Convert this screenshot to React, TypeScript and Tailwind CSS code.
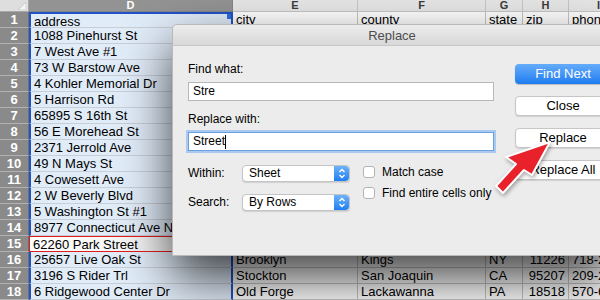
import React from "react";

const cols = [
  { name: "D", w: 204 },
  { name: "E", w: 125 },
  { name: "F", w: 128 },
  { name: "G", w: 37 },
  { name: "H", w: 46 },
  { name: "I", w: 60 },
];

const rows: string[][] = [
  ["address", "city", "county", "state", "zip", "phone"],
  ["1088 Pinehurst St", "", "", "", "", ""],
  ["7 West Ave #1", "", "", "", "", ""],
  ["73 W Barstow Ave", "", "", "", "", ""],
  ["4 Kohler Memorial Dr", "", "", "", "", ""],
  ["5 Harrison Rd", "", "", "", "", ""],
  ["65895 S 16th St", "", "", "", "", ""],
  ["56 E Morehead St", "", "", "", "", ""],
  ["2371 Jerrold Ave", "", "", "", "", ""],
  ["49 N Mays St", "", "", "", "", ""],
  ["4 Cowesett Ave", "", "", "", "", ""],
  ["2 W Beverly Blvd", "", "", "", "", ""],
  ["5 Washington St #1", "", "", "", "", ""],
  ["8977 Connecticut Ave Nw #3", "", "", "", "", ""],
  ["62260 Park Street", "", "", "", "", ""],
  ["25657 Live Oak St", "Brooklyn", "Kings", "NY", "11226", "718-201-5538"],
  ["3196 S Rider Trl", "Stockton", "San Joaquin", "CA", "95207", "209-242-7022"],
  ["6 Ridgewood Center Dr", "Old Forge", "Lackawanna", "PA", "18518", "570-648-3035"],
];

const font = { fontFamily: '"Liberation Sans", Arial, sans-serif' };

const Stepper: React.FC = () => (
  <div className="w-[15px] h-full rounded-r-[4px] bg-gradient-to-b from-[#6cb1fa] to-[#1c7ff1] flex items-center justify-center">
    <svg width="8" height="11" viewBox="0 0 8 11" fill="none" stroke="white" strokeWidth="1.4">
      <path d="M1.5 4 L4 1.5 L6.5 4" />
      <path d="M1.5 7 L4 9.5 L6.5 7" />
    </svg>
  </div>
);

const Select: React.FC<{ value: string }> = ({ value }) => (
  <div className="w-[108px] h-[17px] bg-white rounded-[4px] border border-[#c4c4c4] shadow-[0_1px_1px_rgba(0,0,0,0.12)] flex items-stretch">
    <div className="flex-1 pl-[6px] text-[12px] leading-[15px] text-black">{value}</div>
    <Stepper />
  </div>
);

const Checkbox: React.FC<{ label: string }> = ({ label }) => (
  <div className="flex items-center gap-[7px] h-[12px]">
    <div className="w-[12px] h-[12px] bg-white border border-[#b3b3b3] rounded-[3px]" />
    <span className="text-[12px] text-black leading-[14px]">{label}</span>
  </div>
);

const Button: React.FC<{ label: string; primary?: boolean }> = ({ label, primary }) =>
  primary ? (
    <div className="w-[96px] h-[20px] rounded-[4px] bg-gradient-to-b from-[#64acfa] to-[#1a7cf0] text-white text-[13px] leading-[20px] text-center shadow-[0_1px_1px_rgba(0,0,0,0.2)]">
      {label}
    </div>
  ) : (
    <div className="w-[96px] h-[20px] rounded-[4px] bg-white border border-[#c6c6c6] text-black text-[13px] leading-[18px] text-center shadow-[0_1px_1px_rgba(0,0,0,0.12)]">
      {label}
    </div>
  );

const ReplaceDialog: React.FC = () => (
  <div className="absolute left-[172px] top-[24px] w-[440px] h-[232px] bg-[#ececec] border border-[#b9b9b9] rounded-t-[5px] shadow-[0_22px_50px_rgba(0,0,0,0.75)] flex flex-col">
    <div className="h-[21px] rounded-t-[5px] bg-gradient-to-b from-[#ececec] to-[#d8d8d8] border-b border-[#c8c8c8] text-center text-[13px] leading-[21px] text-[#4d4d4d]">
      Replace
    </div>
    <div className="flex">
      <div className="w-[309px] ml-[15px] pt-[16px] flex flex-col">
        <div className="text-[12px] leading-[14px] text-black">Find what:</div>
        <div className="mt-[6px] h-[19px] bg-white border border-[#b8b8b8] pl-[4px] text-[12px] leading-[17px] text-black">
          Stre
        </div>
        <div className="mt-[11px] text-[12px] leading-[14px] text-black">Replace with:</div>
        <div className="mt-[6px] h-[19px] bg-white border border-[#6b9fe0] shadow-[0_0_0_2px_#a9c9f1] pl-[4px] text-[12px] leading-[17px] text-black flex items-center">
          <span>Street</span>
          <span className="w-px h-[14px] bg-black" />
        </div>
        <div className="mt-[13px] flex">
          <div className="flex flex-col gap-[11px]">
            <div className="flex items-center">
              <span className="w-[54px] text-[12px] text-black">Within:</span>
              <Select value="Sheet" />
            </div>
            <div className="flex items-center">
              <span className="w-[54px] text-[12px] text-black">Search:</span>
              <Select value="By Rows" />
            </div>
          </div>
          <div className="ml-[13px] pt-[2px] flex flex-col gap-[9px]">
            <Checkbox label="Match case" />
            <Checkbox label="Find entire cells only" />
          </div>
        </div>
      </div>
      <div className="ml-[21px] pt-[18px] flex flex-col gap-[12px]">
        <Button label="Find Next" primary />
        <Button label="Close" />
        <Button label="Replace" />
        <Button label="Replace All" />
      </div>
    </div>
  </div>
);

const App: React.FC = () => {
  return (
    <div className="relative w-[600px] h-[300px] overflow-hidden bg-white" style={font}>
      <div className="flex h-[12px]">
        <div className="relative w-[29px] shrink-0 bg-[#dedede] border-r border-b border-[#a8a8a8]">
          <svg className="absolute right-[2px] bottom-[1px]" width="8" height="8" viewBox="0 0 8 8">
            <polygon points="8,0 8,8 0,8" fill="#f4f4f4" stroke="#b8b8b8" strokeWidth="0.6" />
          </svg>
        </div>
        {cols.map((c, i) => (
          <div
            key={c.name}
            className={
              i === 0
                ? "shrink-0 bg-[#939393] text-white border-r border-b border-[#858585] text-[11px] leading-[11px] text-center font-bold"
                : "shrink-0 bg-[#e6e6e6] text-[#3c3c3c] border-r border-b border-[#c6c6c6] text-[11px] leading-[11px] text-center font-bold"
            }
            style={{ width: c.w }}
          >
            {c.name}
          </div>
        ))}
      </div>
      {rows.map((r, ri) => (
        <div key={ri} className="flex h-[16px]">
          <div className="w-[29px] shrink-0 bg-[#8a8a8a] border-b border-[#b2b2b2] border-r border-r-[#6f6f6f] text-white text-[13px] font-bold leading-[15px] text-center">
            {ri + 1}
          </div>
          {cols.map((c, ci) => {
            const isD = ci === 0;
            const active = isD && ri === 14;
            let cls = "relative shrink-0 overflow-hidden whitespace-nowrap text-[13px] leading-[16px] text-black px-[3px] ";
            if (active) cls += "bg-gradient-to-r from-white to-[#e8e8e8] border border-[#e21c1c]";
            else if (isD)
              cls += "bg-[#e1ecf9] border-b border-[#c9ced6] border-l-2 border-l-[#2152c8] border-r-2 border-r-[#2152c8]" + (ri === 0 ? " border-t-2 border-t-[#2152c8]" : "");
            else cls += "bg-white border-b border-r border-[#c6c6c6]";
            if (ci === 4 && ri > 0) cls += " text-right";
            return (
              <div key={ci} className={cls} style={{ width: c.w }}>
                {r[ci]}
                {isD && ri === 0 && (
                  <div className="absolute right-0 top-0 w-[4px] h-[5px] bg-[#2d6fe0]" />
                )}
              </div>
            );
          })}
        </div>
      ))}
      <ReplaceDialog />
      <svg className="absolute left-0 top-0 pointer-events-none drop-shadow-[1px_2px_2px_rgba(0,0,0,0.35)]" width="600" height="300">
        <polygon
          points="550,142 506,157 516,164 496,186 503,193 524,170 532,175"
          fill="#e8212b"
          stroke="white"
          strokeWidth="2"
          strokeLinejoin="round"
        />
      </svg>
    </div>
  );
};

export default App;
